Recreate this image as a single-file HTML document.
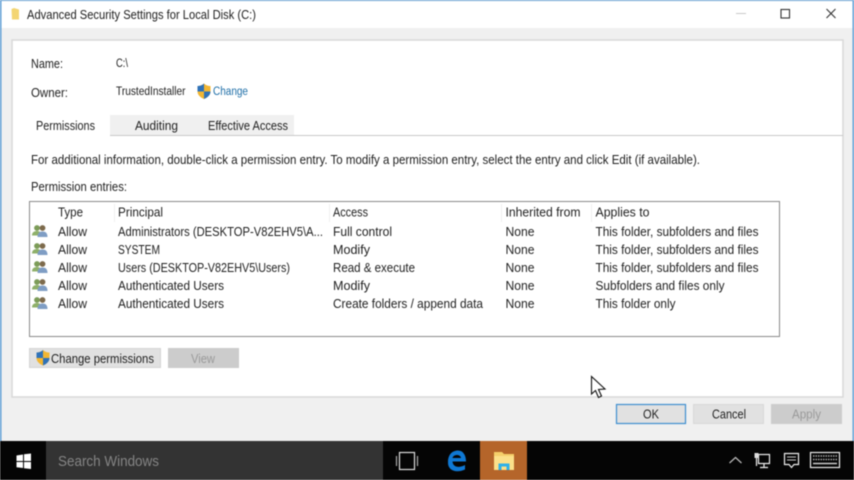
<!DOCTYPE html>
<html><head><meta charset="utf-8"><style>
html,body{margin:0;padding:0;width:854px;height:480px;overflow:hidden;background:#f0f0f0}
svg{display:block;filter:blur(.45px)}
text{font-family:"Liberation Sans",sans-serif;font-size:12.5px;fill:#222}
</style></head><body>
<svg width="854" height="480" viewBox="0 0 854 480" xmlns="http://www.w3.org/2000/svg">
<defs>
<g id="sh"><path d="M7 0 C5 2 2.500 2.500 0.500 2.500 L0.500 8 C0.500 11.500 3.500 14 7 15.500 C10.500 14 13.500 11.500 13.500 8 L13.500 2.500 C11.500 2.500 9 2 7 0Z" fill="#f2b632"/><path d="M7 0 C5 2 2.500 2.500 0.500 2.500 L0.500 8 L7 8Z" fill="#2f72b8"/><path d="M7 8 L13.500 8 C13.500 11.500 10.500 14 7 15.500Z" fill="#2f72b8"/></g>
<g id="us"><circle cx="5" cy="3.500" r="2.900" fill="#7c9c58"/><path d="M0 11 C0 7.500 2.500 6.500 5 6.500 C7.500 6.500 9 7.500 9 11Z" fill="#8fb06a"/><circle cx="10.500" cy="3.500" r="2.900" fill="#7d6a4c"/><path d="M5.500 12.500 C5.500 8.500 7.500 7 10.500 7 C13.500 7 15.500 8.500 15.500 12.500Z" fill="#7f9dc4"/></g>
</defs>
<rect width="854" height="480" fill="#f0f0f0"/>
<rect width="854" height="28" fill="#fff"/>
<rect x="0" y="0" width="854" height="1" fill="#6aa3d5"/>
<rect x="0" y="0" width="1.500" height="441" fill="#5f9fd6"/>
<rect x="852.500" y="0" width="1.500" height="441" fill="#5f9fd6"/>

<path d="M11.500 9 L14 8 L19 9.500 L19 19.500 L12 19.500 Z" fill="#f3d572"/>
<text lengthAdjust="spacingAndGlyphs" x="27" y="19" textLength="229">Advanced Security Settings for Local Disk (C:)</text>
<rect x="736" y="13" width="10" height="1" fill="#c8c8c8"/>
<rect x="781" y="9.500" width="8.500" height="8.500" fill="none" stroke="#333" stroke-width="1.100"/>
<path d="M826.500 9 L835.500 18 M835.500 9 L826.500 18" stroke="#333" stroke-width="1.100"/>

<rect x="12" y="40" width="831" height="357" fill="#fff" stroke="#d8d8d8" stroke-width="1.500"/>

<text lengthAdjust="spacingAndGlyphs" x="31" y="68" textLength="32">Name:</text>
<text lengthAdjust="spacingAndGlyphs" x="116" y="67" style="font-size:11.500px" textLength="12">C:\</text>
<text lengthAdjust="spacingAndGlyphs" x="31" y="97" textLength="37">Owner:</text>
<text lengthAdjust="spacingAndGlyphs" x="116" y="95" style="font-size:11.500px" textLength="69.500">TrustedInstaller</text>
<use href="#sh" x="197" y="83.500"/>
<text lengthAdjust="spacingAndGlyphs" x="213" y="95" style="font-size:11.500px;fill:#1f6fa8" textLength="35">Change</text>

<rect x="110" y="115" width="184" height="20" fill="#f0f0f0"/>
<rect x="110" y="135" width="733" height="1" fill="#c8c8c8"/>
<text lengthAdjust="spacingAndGlyphs" x="36" y="130" textLength="59">Permissions</text>
<text lengthAdjust="spacingAndGlyphs" x="135" y="130" textLength="43">Auditing</text>
<text lengthAdjust="spacingAndGlyphs" x="208" y="130" textLength="80">Effective Access</text>

<text lengthAdjust="spacingAndGlyphs" x="31" y="164" textLength="669">For additional information, double-click a permission entry. To modify a permission entry, select the entry and click Edit (if available).</text>
<text lengthAdjust="spacingAndGlyphs" x="31" y="191" textLength="96">Permission entries:</text>

<rect x="29.500" y="201.500" width="750" height="135" fill="#fff" stroke="#8a8a8a" stroke-width="1"/>
<path d="M114.500 204V222 M329.500 204V222 M501.500 204V222 M591.500 204V222" stroke="#f0f0f0"/>
<text lengthAdjust="spacingAndGlyphs" x="58" y="216.500" textLength="25">Type</text>
<text lengthAdjust="spacingAndGlyphs" x="118" y="216.500" textLength="45">Principal</text>
<text lengthAdjust="spacingAndGlyphs" x="333" y="216.500" textLength="35">Access</text>
<text lengthAdjust="spacingAndGlyphs" x="505.500" y="216.500" textLength="75">Inherited from</text>
<text lengthAdjust="spacingAndGlyphs" x="595.500" y="216.500" textLength="54">Applies to</text>

<use href="#us" x="32" y="224.500"/><use href="#us" x="32" y="242.500"/><use href="#us" x="32" y="260.500"/><use href="#us" x="32" y="278.500"/><use href="#us" x="32" y="296.500"/>

<text lengthAdjust="spacingAndGlyphs" x="58" y="236" textLength="29">Allow</text>
<text lengthAdjust="spacingAndGlyphs" x="118" y="236" textLength="205">Administrators (DESKTOP-V82EHV5\A...</text>
<text lengthAdjust="spacingAndGlyphs" x="333" y="236" textLength="59">Full control</text>
<text lengthAdjust="spacingAndGlyphs" x="505.500" y="236" textLength="29">None</text>
<text lengthAdjust="spacingAndGlyphs" x="595.500" y="236" textLength="163">This folder, subfolders and files</text>

<text lengthAdjust="spacingAndGlyphs" x="58" y="254" textLength="29">Allow</text>
<text lengthAdjust="spacingAndGlyphs" x="118" y="254" textLength="42">SYSTEM</text>
<text lengthAdjust="spacingAndGlyphs" x="333" y="254" textLength="37">Modify</text>
<text lengthAdjust="spacingAndGlyphs" x="505.500" y="254" textLength="29">None</text>
<text lengthAdjust="spacingAndGlyphs" x="595.500" y="254" textLength="163">This folder, subfolders and files</text>

<text lengthAdjust="spacingAndGlyphs" x="58" y="272" textLength="29">Allow</text>
<text lengthAdjust="spacingAndGlyphs" x="118" y="272" textLength="172">Users (DESKTOP-V82EHV5\Users)</text>
<text lengthAdjust="spacingAndGlyphs" x="333" y="272" textLength="82">Read &amp; execute</text>
<text lengthAdjust="spacingAndGlyphs" x="505.500" y="272" textLength="29">None</text>
<text lengthAdjust="spacingAndGlyphs" x="595.500" y="272" textLength="163">This folder, subfolders and files</text>

<text lengthAdjust="spacingAndGlyphs" x="58" y="290" textLength="29">Allow</text>
<text lengthAdjust="spacingAndGlyphs" x="118" y="290" textLength="106">Authenticated Users</text>
<text lengthAdjust="spacingAndGlyphs" x="333" y="290" textLength="37">Modify</text>
<text lengthAdjust="spacingAndGlyphs" x="505.500" y="290" textLength="29">None</text>
<text lengthAdjust="spacingAndGlyphs" x="595.500" y="290" textLength="129">Subfolders and files only</text>

<text lengthAdjust="spacingAndGlyphs" x="58" y="308" textLength="29">Allow</text>
<text lengthAdjust="spacingAndGlyphs" x="118" y="308" textLength="106">Authenticated Users</text>
<text lengthAdjust="spacingAndGlyphs" x="333" y="308" textLength="150">Create folders / append data</text>
<text lengthAdjust="spacingAndGlyphs" x="505.500" y="308" textLength="29">None</text>
<text lengthAdjust="spacingAndGlyphs" x="595.500" y="308" textLength="80">This folder only</text>

<rect x="29.500" y="348.500" width="131" height="19" fill="#e1e1e1" stroke="#d4d4d4"/>
<use href="#sh" x="36" y="350"/>
<text lengthAdjust="spacingAndGlyphs" x="51" y="363" textLength="103">Change permissions</text>
<rect x="168" y="348" width="71" height="20" fill="#cccccc"/>
<text lengthAdjust="spacingAndGlyphs" x="191" y="363" style="fill:#9a9a9a" textLength="24">View</text>

<rect x="616.500" y="404.500" width="69" height="19" fill="#e1e1e1" stroke="#3f8fd0" stroke-width="1.200"/>
<text lengthAdjust="spacingAndGlyphs" x="643" y="418.500" textLength="16">OK</text>
<rect x="693.500" y="404.500" width="70" height="19" fill="#e1e1e1" stroke="#d8d8d8"/>
<text lengthAdjust="spacingAndGlyphs" x="712" y="418.500" textLength="34">Cancel</text>
<rect x="771" y="404" width="71" height="20" fill="#cccccc"/>
<text lengthAdjust="spacingAndGlyphs" x="792" y="418.500" style="fill:#9a9a9a" textLength="29">Apply</text>

<path d="M591.500 376.500 L591.500 394 L595.500 390.500 L598.500 397.500 L601.500 396 L598.500 389.500 L605 389 Z" fill="#fff" stroke="#111" stroke-width="1.100" stroke-linejoin="miter"/>

<rect x="0" y="441" width="854" height="39" fill="#050505"/>
<rect x="46" y="441" width="337" height="39" fill="#333"/>
<path d="M16.500 455.500 L23 454.500 L23 461 L16.500 461Z M24 454.300 L31 453.500 L31 461 L24 461Z M16.500 462 L23 462 L23 468 L16.500 467.200Z M24 462 L31 462 L31 469 L24 468.200Z" fill="#fff"/>
<text lengthAdjust="spacingAndGlyphs" x="58" y="466" style="font-size:14.500px;fill:#858585" textLength="101">Search Windows</text>
<rect x="399.500" y="452.500" width="15" height="17" fill="none" stroke="#ddd" stroke-width="1.200"/>
<path d="M396.500 456V466 M417.500 456V466" stroke="#aaa" stroke-width="1.200"/>
<path d="M448 462 C448 455 452 450.500 458 450.500 C463 450.500 466 455 466 461.500 L452.500 461.500 C453 467 458.500 468.500 465 465 L465 469.500 C456 473.500 447.500 470.500 448 462Z M452.500 458 L461 458 C460.500 454 453.500 454 452.500 458Z" fill="#0f78d4" fill-rule="evenodd"/>
<rect x="480" y="441" width="47" height="39" fill="#b5652a"/>
<path d="M494 452 L502 452 L504 454 L514 454 L514 457 L494 457Z" fill="#f5cf6a"/>
<rect x="494" y="456" width="20" height="14" fill="#fbe08a"/>
<path d="M498.500 470 V463.500 H509.500 V470 H506.500 V466.500 H501.500 V470Z" fill="#2fb1e8"/>

<path d="M729.500 463 L735.500 457.500 L741.500 463" fill="none" stroke="#bbb" stroke-width="1.200"/>
<rect x="758.500" y="454.500" width="11" height="9" fill="none" stroke="#eee" stroke-width="1.200"/>
<path d="M764 463.500V467 M760 467.500H768" stroke="#eee" stroke-width="1.200"/>
<rect x="754.500" y="453" width="4" height="5" fill="#ddd"/>
<path d="M756.500 458V466" stroke="#eee" stroke-width="1.200"/>
<path d="M784.500 453.500 H798.500 V464.500 H794 L791.500 467.500 L789 464.500 H784.500Z" fill="none" stroke="#eee" stroke-width="1.200"/>
<path d="M787 457H796 M787 460H796" stroke="#ccc"/>
<rect x="810.500" y="452.500" width="29" height="15" fill="none" stroke="#eee" stroke-width="1.200"/>
<path d="M813 456H837 M813 459.500H837" stroke="#aaa" stroke-width="1.500" stroke-dasharray="1.500 1"/>
<path d="M813 463.500H837" stroke="#ccc" stroke-width="1.500"/>
</svg>
</body></html>
